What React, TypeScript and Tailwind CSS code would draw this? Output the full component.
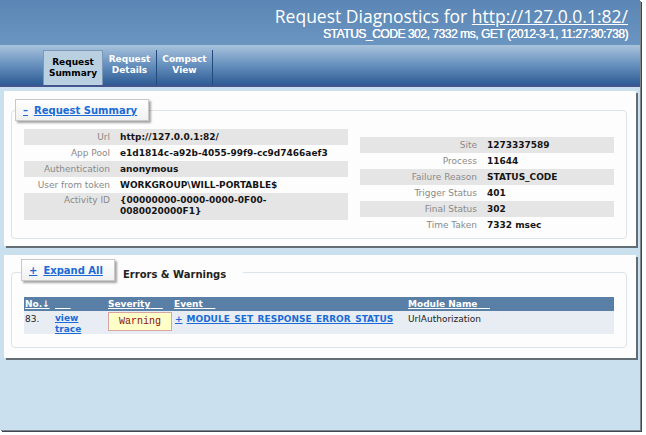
import React from "react";

const leftRows: [string, React.ReactNode][] = [
  ["Url", "http://127.0.0.1:82/"],
  ["App Pool", "e1d1814c-a92b-4055-99f9-cc9d7466aef3"],
  ["Authentication", "anonymous"],
  ["User from token", "WORKGROUP\\WILL-PORTABLE$"],
  [
    "Activity ID",
    <>
      {"{00000000-0000-0000-0F00-"}
      <br />
      {"0080020000F1}"}
    </>,
  ],
];

const rightRows: [string, string][] = [
  ["Site", "1273337589"],
  ["Process", "11644"],
  ["Failure Reason", "STATUS_CODE"],
  ["Trigger Status", "401"],
  ["Final Status", "302"],
  ["Time Taken", "7332 msec"],
];

function LegendButton({ sign, label }: { sign: string; label: string }) {
  return (
    <div className="flex h-[22px] items-center gap-[6px] border border-[#c9c9c9] bg-gradient-to-b from-white to-[#f1f1f1] pl-[7px] pr-[11px] shadow-[2px_2px_2px_rgba(0,0,0,0.35)]">
      <span className="font-bold text-[10px] text-[#1a6bd6] underline">{sign}</span>
      <span className="font-bold text-[10px] text-[#1a6bd6] underline">{label}</span>
    </div>
  );
}

export default function App() {
  return (
    <div
      className="w-[646px] h-[435px] bg-white overflow-hidden"
      style={{ fontFamily: '"DejaVu Sans", Verdana, sans-serif' }}
    >
      <div className="w-[640px] h-[430px] bg-[#cbe0ee] shadow-[1px_1px_0_#7d8790,2px_2px_0_#3f464d] flex flex-col">
        {/* Title header */}
        <div className="h-[45px] bg-gradient-to-b from-[#5a86b5] to-[#6b95c1] flex flex-col items-end pr-[12px] pt-[5px] text-white">
          <div
            className="text-[17.5px] leading-[22px]"
            style={{ fontFamily: '"Open Sans", "Noto Sans", sans-serif' }}
          >
            Request Diagnostics for <span className="underline">http://127.0.0.1:82/</span>
          </div>
          <div
            className="text-[12px] leading-[14px] tracking-[-0.45px]"
            style={{ fontFamily: '"Liberation Sans", Arial, sans-serif', textShadow: "0.3px 0 0 #fff" }}
          >
            STATUS_CODE 302, 7332 ms, GET (2012-3-1, 11:27:30:738)
          </div>
        </div>
        {/* Tab bar */}
        <div className="h-[42px] bg-gradient-to-b from-[#a9c3dc] via-[#6690bd] to-[#2d5b94] flex items-end pl-[43px] border-b-2 border-[#45558c]">
          <div className="w-[60px] h-[35px] bg-[#b9d0e0] border border-b-0 border-[#7b98b8] flex items-center justify-center text-center text-[9px] leading-[11px] font-bold text-black pb-[1px]">
            Request
            <br />
            Summary
          </div>
          <div className="w-[54px] h-[35px] flex items-center justify-center text-center text-[9px] leading-[11px] font-bold text-white pb-[6px] border-r border-[#234a7c]">
            Request
            <br />
            Details
          </div>
          <div className="w-[56px] h-[35px] flex items-center justify-center text-center text-[9px] leading-[11px] font-bold text-white pb-[6px] border-r border-[#234a7c]">
            Compact
            <br />
            View
          </div>
        </div>

        {/* Content */}
        <div className="flex flex-col pl-[4px] pr-[4px] pt-[4px] gap-[9px]">
          {/* Panel 1 */}
          <div className="h-[155px] bg-[#fdfdfd] shadow-[2px_2px_0_#626d76] pt-[8px] pl-[7px] pr-[9px]">
            <fieldset className="h-[140px] border border-[#dce3e9] rounded-[4px]">
              <legend className="ml-[3px]">
                <LegendButton sign="–" label="Request Summary" />
              </legend>
              <div className="flex items-start gap-[12px] pl-[12px] pr-[12px] text-[9px]">
                <div className="w-[324px] mt-[8px]">
                  {leftRows.map(([k, v], i) => (
                    <div
                      key={k}
                      className={
                        "flex " +
                        (i % 2 === 0 ? "bg-[#e5e5e5] " : "") +
                        (k === "Activity ID" ? "pt-[2px] pb-[3px] leading-[11px]" : "h-[16px] items-center leading-[16px]")
                      }
                    >
                      <div className="w-[86px] text-right text-[#8a8a8a]">{k}</div>
                      <div className="pl-[10px] font-bold text-[#151515]">{v}</div>
                    </div>
                  ))}
                </div>
                <div className="w-[254px] mt-[16px]">
                  {rightRows.map(([k, v], i) => (
                    <div
                      key={k}
                      className={"flex h-[16px] items-center leading-[16px] " + (i % 2 === 0 ? "bg-[#e5e5e5]" : "")}
                    >
                      <div className="w-[117px] text-right text-[#8a8a8a]">{k}</div>
                      <div className="pl-[10px] font-bold text-[#151515]">{v}</div>
                    </div>
                  ))}
                </div>
              </div>
            </fieldset>
          </div>

          {/* Panel 2 */}
          <div className="h-[103px] bg-[#fdfdfd] shadow-[2px_2px_0_#626d76] pt-[4px] pl-[7px] pr-[9px]">
            <fieldset className="h-[89px] border border-[#dce3e9] rounded-[4px]">
              <legend className="ml-[9px] flex h-[26px] items-start pr-[17px]">
                <LegendButton sign="+" label="Expand All" />
                <span className="ml-[8px] mt-[10px] text-[10px] leading-[12px] font-bold text-[#222]">
                  Errors &amp; Warnings
                </span>
              </legend>
              <div className="pl-[12px] pr-[12px] mt-[12px] text-[9px]">
                <div className="flex h-[14px] items-center bg-[#5a7fa6] text-white font-bold underline leading-[14px]">
                  <div className="w-[30px] pl-[1px]">No.↓</div>
                  <div className="w-[54px] pl-[1px]">{"\u00a0\u00a0\u00a0\u00a0\u00a0"}</div>
                  <div className="w-[66px]">Severity{"\u00a0\u00a0\u00a0\u00a0"}</div>
                  <div className="w-[234px]">Event{"\u00a0\u00a0\u00a0\u00a0"}</div>
                  <div className="flex-1">Module Name{"\u00a0\u00a0\u00a0\u00a0"}</div>
                </div>
                <div className="flex h-[23px] items-start bg-[#e7edf3] leading-[11px]">
                  <div className="w-[30px] pl-[1px] pt-[3px] text-[#222]">83.</div>
                  <div className="w-[54px] pl-[1px] pt-[2px] font-bold text-[#1a6bd6] underline">
                    view
                    <br />
                    trace
                  </div>
                  <div className="w-[66px] pt-[1px]">
                    <div
                      className="w-[64px] h-[19px] flex items-center justify-center bg-[#ffffc8] border border-[#d9a3a3] text-[10px] text-[#8b1010]"
                      style={{ fontFamily: '"Liberation Mono", "Courier New", monospace' }}
                    >
                      Warning
                    </div>
                  </div>
                  <div className="w-[234px] pl-[1px] pt-[3px] font-bold text-[#1a6bd6] underline flex gap-[4px]">
                    <span>+</span>
                    <span>MODULE_SET_RESPONSE_ERROR_STATUS</span>
                  </div>
                  <div className="flex-1 pt-[3px] text-[#222]">UrlAuthorization</div>
                </div>
              </div>
            </fieldset>
          </div>
        </div>
      </div>
    </div>
  );
}
